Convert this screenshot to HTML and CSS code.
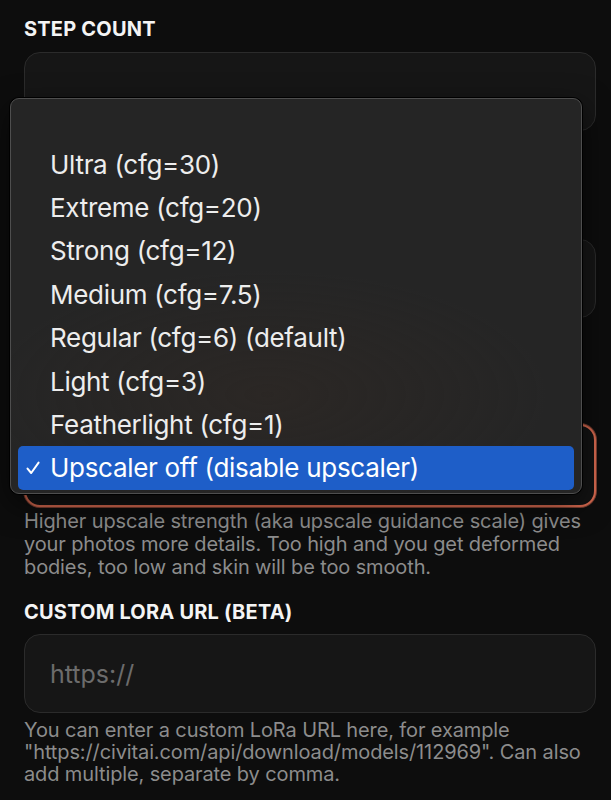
FILE: index.html
```html
<!DOCTYPE html>
<html lang="en">
<head>
<meta charset="utf-8">
<title>Settings</title>
<link rel="stylesheet" href="styles.css">
</head>
<body>
<main class="page">
  <section class="field">
    <div class="label">STEP COUNT</div>
    <div class="input"></div>
  </section>

  <section class="field field-2">
    <div class="input"></div>
  </section>

  <section class="field field-3">
    <div class="input select-focus"></div>
    <p class="help">Higher upscale strength (aka upscale guidance scale) gives your photos more details. Too high and you get deformed bodies, too low and skin will be too smooth.</p>
  </section>

  <section class="field field-4">
    <div class="label">CUSTOM LORA URL (BETA)</div>
    <div class="input input-text"><span class="placeholder">https://</span></div>
    <p class="help help-lora">You can enter a custom LoRa URL here, for example "https://civitai.com/api/download/models/112969". Can also add multiple, separate by comma.</p>
  </section>

  <ul class="menu">
    <li class="item item-blank"></li>
    <li class="item"><span class="text">Ultra (cfg=30)</span></li>
    <li class="item"><span class="text">Extreme (cfg=20)</span></li>
    <li class="item"><span class="text">Strong (cfg=12)</span></li>
    <li class="item"><span class="text">Medium (cfg=7.5)</span></li>
    <li class="item"><span class="text">Regular (cfg=6) (default)</span></li>
    <li class="item"><span class="text">Light (cfg=3)</span></li>
    <li class="item"><span class="text">Featherlight (cfg=1)</span></li>
    <li class="item item-selected">
      <svg class="check" width="14" height="14" viewBox="0 0 14 14"><path d="M1.5 7.6 L5.2 12 L12.6 1.6" fill="none" stroke="#ffffff" stroke-width="2" stroke-linecap="round" stroke-linejoin="round"/></svg>
      <span class="text">Upscaler off (disable upscaler)</span>
    </li>
  </ul>
</main>
</body>
</html>
```

FILE: styles.css
```css
* { box-sizing: border-box; }

html, body {
  margin: 0;
  padding: 0;
  background: #0d0d0d;
  font-family: "Inter", "Noto Sans", sans-serif;
  color: #f2f2f2;
}

.page {
  position: relative;
  width: 611px;
  height: 800px;
  padding: 17px 15px 0 24px;
  overflow: hidden;
  display: flex;
  flex-direction: column;
}

.field {
  display: flex;
  flex-direction: column;
}

.label {
  height: 24px;
  line-height: 24px;
  font-size: 20px;
  font-weight: 700;
  color: #f4f4f4;
  letter-spacing: 0.2px;
}

.input {
  margin-top: 11px;
  height: 79px;
  border: 1px solid #2b2b2b;
  border-radius: 16px;
  background: #161616;
}

.field-2 .input { margin-top: 108px; }

.field-3 .input { margin-top: 106px; }

.select-focus {
  height: 83px;
  border: 2px solid #d96a50;
  box-shadow: 0 0 0 1px rgba(217, 106, 80, 0.55);
  background: #131313;
}

.help {
  margin: 3px 0 0;
  font-size: 20px;
  line-height: 22.8px;
  letter-spacing: -0.12px;
  color: #8c8c8c;
}

.field-4 { margin-top: 22px; }
.field-4 .input { margin-top: 9.5px; }

.input-text {
  display: flex;
  align-items: center;
  padding-left: 25px;
}

.placeholder {
  font-size: 25px;
  color: #6c6c6c;
  padding-top: 2px;
}

.help-lora {
  margin-top: 6px;
  line-height: 22px;
}

.menu {
  position: absolute;
  left: 10px;
  top: 98px;
  width: 572px;
  margin: 0;
  padding: 0 7px 3.5px;
  list-style: none;
  border: 1px solid #4e4e4e;
  border-radius: 9px;
  background:
    radial-gradient(ellipse 70% 45% at 45% 75%, rgba(52, 42, 36, 0.4), rgba(37, 37, 37, 0) 70%),
    #252525;
  box-shadow: 0 0 0 1px #000, 0 10px 30px rgba(0, 0, 0, 0.6);
}

.item {
  position: relative;
  height: 43.4px;
  display: flex;
  align-items: center;
  padding-left: 32px;
  font-size: 26px;
  letter-spacing: -0.3px;
  color: #ededed;
  border-radius: 5px;
}

.item-selected {
  background: #1e5ec8;
  color: #ffffff;
}

.check {
  position: absolute;
  left: 8px;
  top: 15px;
}
```
